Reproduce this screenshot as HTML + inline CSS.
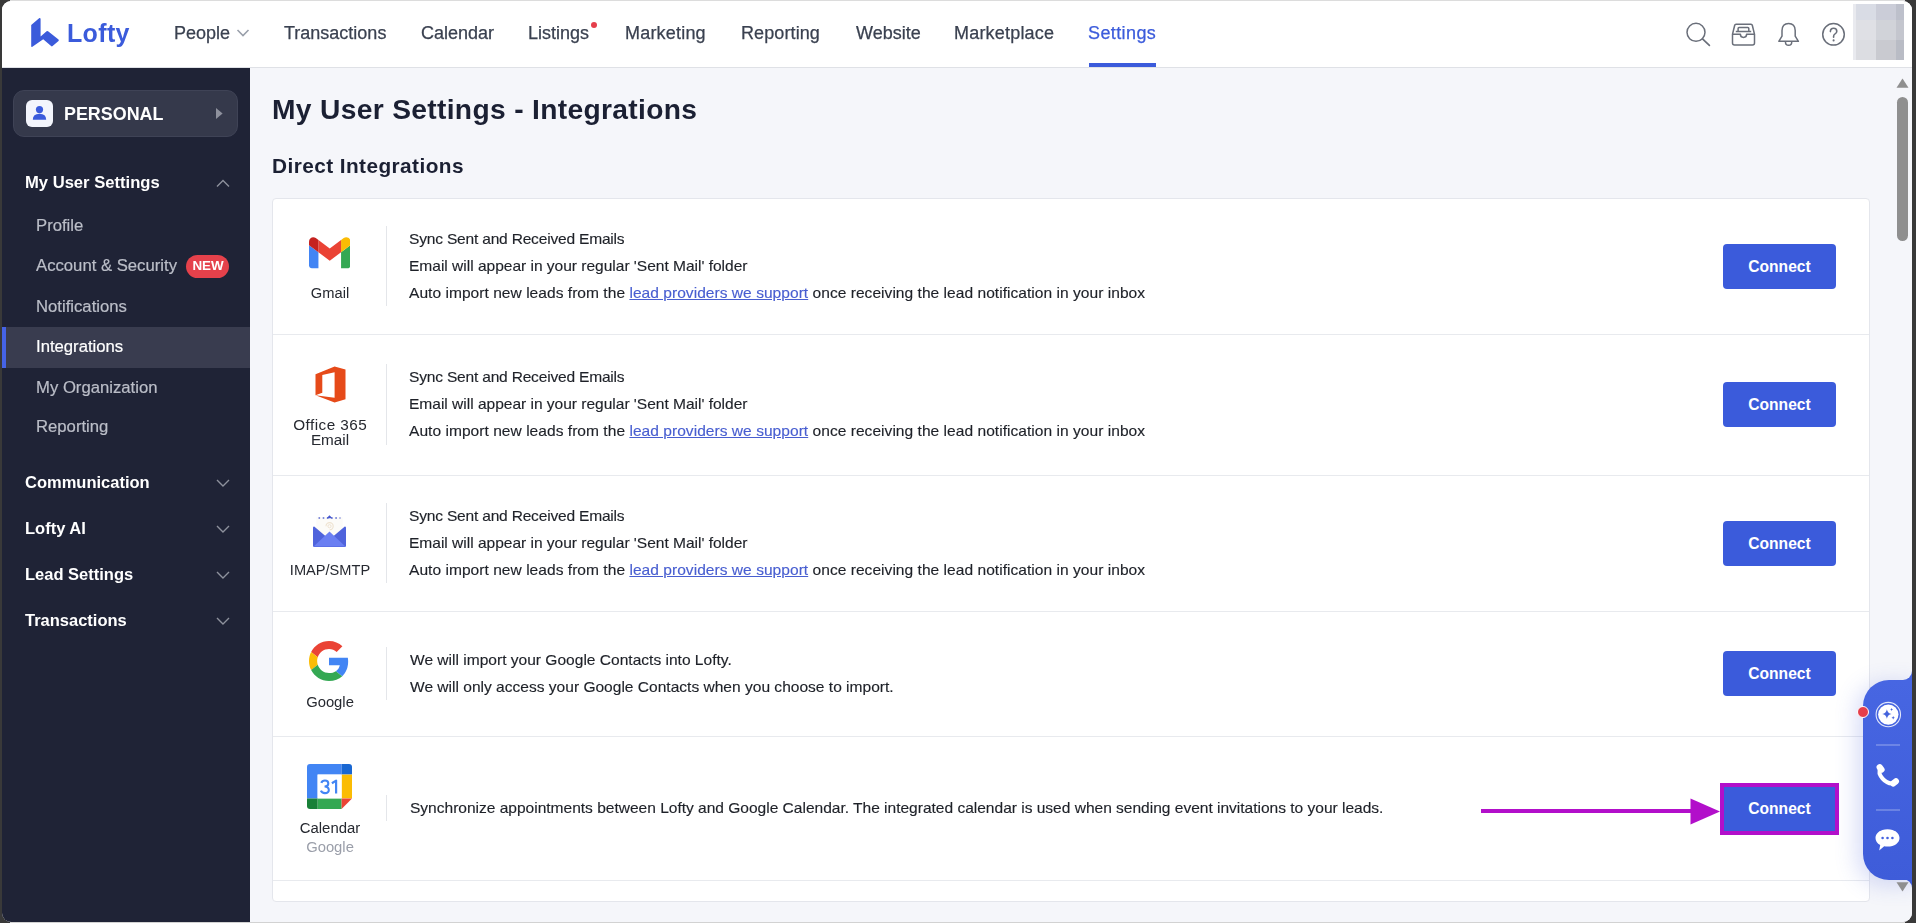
<!DOCTYPE html>
<html><head><meta charset="utf-8"><style>
html,body{margin:0;padding:0;}
body{width:1916px;height:923px;background:#393939;position:relative;overflow:hidden;font-family:"Liberation Sans", sans-serif;}
.win{position:absolute;left:2px;top:1px;width:1910px;height:921px;border-radius:9px;overflow:hidden;background:#f5f6fa;}
.t{position:absolute;white-space:nowrap;line-height:1;-webkit-font-smoothing:antialiased;will-change:transform;}

.btn{position:absolute;width:113px;height:45px;background:#3b5bdb;border-radius:4px;color:#fff;font-size:15.6px;font-weight:700;line-height:45px;text-align:center;}
</style></head><body>
<div style="position:absolute;left:10px;top:0;width:1895px;height:1px;background:#dcdcdc"></div>
<div style="position:absolute;left:10px;top:922px;width:1895px;height:1px;background:#d2d2d2"></div>
<div class="win">
<div style="position:absolute;left:0px;top:0px;width:1910px;height:66px;background:#fff"></div>
<div style="position:absolute;left:0px;top:66px;width:1910px;height:1px;background:#dfe1e6"></div>
<svg style="position:absolute;left:29px;top:16px" width="30" height="32" viewBox="31 17 30 32"><path fill="#3b5bdb" d="M31.2 25 L39.4 18 Q40.6 17.8 40.6 19.2 L40.6 36.6 L46.6 31.3 Q47.5 30.7 48.4 31.4 L58.5 39.6 Q59.2 40.4 58.5 41.1 L52.6 46.1 Q51.9 46.7 51.1 46.1 L43.2 39.3 L32.4 46.8 Q31.2 47.5 31.2 46 Z"/></svg>
<div class="t" style="left:65px;top:20px;font-size:25px;color:#3b5bdb;font-weight:700;letter-spacing:0.35px;">Lofty</div>
<div class="t" style="left:172px;top:23px;font-size:18px;color:#3a4150;font-weight:400;letter-spacing:0px;-webkit-text-stroke:0.25px #3a4150">People</div>
<div class="t" style="left:282px;top:23px;font-size:18.0px;color:#3a4150;font-weight:400;letter-spacing:0px;-webkit-text-stroke:0.25px #3a4150">Transactions</div>
<div class="t" style="left:419px;top:23px;font-size:18px;color:#3a4150;font-weight:400;letter-spacing:0px;-webkit-text-stroke:0.25px #3a4150">Calendar</div>
<div class="t" style="left:526px;top:23px;font-size:18.0px;color:#3a4150;font-weight:400;letter-spacing:0px;-webkit-text-stroke:0.25px #3a4150">Listings</div>
<div class="t" style="left:623px;top:23px;font-size:18.0px;color:#3a4150;font-weight:400;letter-spacing:0.2px;-webkit-text-stroke:0.25px #3a4150">Marketing</div>
<div class="t" style="left:739px;top:23px;font-size:18.0px;color:#3a4150;font-weight:400;letter-spacing:0.1px;-webkit-text-stroke:0.25px #3a4150">Reporting</div>
<div class="t" style="left:854px;top:23px;font-size:18px;color:#3a4150;font-weight:400;letter-spacing:0px;-webkit-text-stroke:0.25px #3a4150">Website</div>
<div class="t" style="left:952px;top:23px;font-size:18px;color:#3a4150;font-weight:400;letter-spacing:0.2px;-webkit-text-stroke:0.25px #3a4150">Marketplace</div>
<div class="t" style="left:1086px;top:23px;font-size:18px;color:#3b5bdb;font-weight:400;letter-spacing:0.4px;-webkit-text-stroke:0.25px #3b5bdb">Settings</div>
<div style="position:absolute;left:1087px;top:62px;width:67px;height:4px;background:#3b5bdb"></div>
<svg style="position:absolute;left:234px;top:27px" width="14" height="10" viewBox="0 0 14 10"><path d="M1.5 2 L7 7.5 L12.5 2" fill="none" stroke="#9aa0ab" stroke-width="1.6"/></svg>
<div style="position:absolute;left:589px;top:21px;width:6px;height:6px;background:#e53e4b;border-radius:50%"></div>
<svg style="position:absolute;left:1682px;top:20px" width="28" height="28" viewBox="0 0 28 28"><circle cx="12" cy="11.3" r="9" fill="none" stroke="#6a6f7a" stroke-width="1.5"/><path d="M18.5 17.9 L25.4 24.4" stroke="#6a6f7a" stroke-width="1.7" stroke-linecap="round"/></svg>
<svg style="position:absolute;left:1728px;top:21px" width="28" height="26" viewBox="0 0 28 26">
<path d="M6 2.3 L21 2.3 Q22 2.3 22.3 3.3 L24.5 12.3 L24.5 21.1 Q24.5 23.1 22.5 23.1 L4.5 23.1 Q2.5 23.1 2.5 21.1 L2.5 12.3 L4.7 3.3 Q5 2.3 6 2.3 Z" fill="none" stroke="#6a6f7a" stroke-width="1.5" stroke-linejoin="round"/>
<path d="M2.5 12.3 L10.4 12.3 Q10.4 15.4 13.5 15.4 Q16.6 15.4 16.6 12.3 L24.5 12.3" fill="none" stroke="#6a6f7a" stroke-width="1.5" stroke-linejoin="round"/>
<path d="M5.8 9.5 L21.2 9.5" stroke="#6a6f7a" stroke-width="1.5"/>
<path d="M8.1 9.5 L8.1 6.6 Q8.1 5.6 9.1 5.6 L17.8 5.6 Q18.8 5.6 18.8 6.6 L18.8 9.5" fill="none" stroke="#6a6f7a" stroke-width="1.5"/>
</svg>
<svg style="position:absolute;left:1774px;top:20px" width="26" height="28" viewBox="0 0 26 28"><path d="M12.6 2.6 Q19 2.6 19.2 9.6 L19.2 15.2 L22.4 20.3 L2.8 20.3 L6 15.2 L6 9.6 Q6.2 2.6 12.6 2.6 Z" fill="none" stroke="#6a6f7a" stroke-width="1.5" stroke-linejoin="round"/><path d="M9.4 20.4 Q9.5 24.3 12.6 24.3 Q15.7 24.3 15.8 20.4" fill="none" stroke="#6a6f7a" stroke-width="1.5"/></svg>
<svg style="position:absolute;left:1818px;top:20px" width="28" height="28" viewBox="0 0 28 28"><circle cx="13.5" cy="13.3" r="10.8" fill="none" stroke="#6a6f7a" stroke-width="1.5"/><path d="M10.4 10.6 Q10.4 7.2 13.6 7.2 Q16.8 7.2 16.8 10.2 Q16.8 12.1 14.8 13.1 Q13.6 13.7 13.6 15.4 L13.6 16.2" fill="none" stroke="#6a6f7a" stroke-width="1.6" stroke-linecap="round"/><circle cx="13.6" cy="19.4" r="1.05" fill="#6a6f7a"/></svg>
<div style="position:absolute;left:1851px;top:3px;width:3px;height:16px;background:#e9eaef"></div>
<div style="position:absolute;left:1851px;top:19px;width:3px;height:20px;background:#e9eaef"></div>
<div style="position:absolute;left:1851px;top:39px;width:3px;height:20px;background:#e9eaef"></div>
<div style="position:absolute;left:1854px;top:3px;width:20px;height:16px;background:#d9dce5"></div>
<div style="position:absolute;left:1854px;top:19px;width:20px;height:20px;background:#dfe0e5"></div>
<div style="position:absolute;left:1854px;top:39px;width:20px;height:20px;background:#dcdde2"></div>
<div style="position:absolute;left:1874px;top:3px;width:20px;height:16px;background:#cbcdd8"></div>
<div style="position:absolute;left:1874px;top:19px;width:20px;height:20px;background:#d1d3d9"></div>
<div style="position:absolute;left:1874px;top:39px;width:20px;height:20px;background:#c9cad0"></div>
<div style="position:absolute;left:1894px;top:3px;width:8px;height:16px;background:#bdc0cb"></div>
<div style="position:absolute;left:1894px;top:19px;width:8px;height:20px;background:#c4c6ce"></div>
<div style="position:absolute;left:1894px;top:39px;width:8px;height:20px;background:#b9bcc5"></div>
<div style="position:absolute;left:0px;top:67px;width:248px;height:923px;background:#1f2336"></div>
<div style="position:absolute;left:11px;top:89px;width:225px;height:47px;background:#35394b;border:1px solid #3f4356;box-sizing:border-box;border-radius:11px"></div>
<div style="position:absolute;left:24px;top:99px;width:27px;height:27px;background:#f3f5fc;border-radius:6px"></div>
<svg style="position:absolute;left:24px;top:99px" width="27" height="27" viewBox="0 0 27 27"><circle cx="13.5" cy="9.6" r="3.6" fill="#3b5bdb"/><path d="M6.8 19.8 Q6.8 13.8 13.5 13.8 Q20.2 13.8 20.2 19.8 Z" fill="#3b5bdb"/></svg>
<div class="t" style="left:62px;top:105px;font-size:17.9px;color:#ffffff;font-weight:700;letter-spacing:0px;">PERSONAL</div>
<svg style="position:absolute;left:213px;top:106px" width="9" height="13" viewBox="0 0 9 13"><path d="M1 1 L7.6 6.5 L1 12 Z" fill="#8e919d"/></svg>
<div class="t" style="left:23px;top:174px;font-size:16.6px;color:#ffffff;font-weight:700;letter-spacing:0px;">My User Settings</div>
<svg style="position:absolute;left:213px;top:176px" width="16" height="12" viewBox="0 0 16 12"><path d="M2 9.5 L8 3.5 L14 9.5" fill="none" stroke="#8e919d" stroke-width="1.4"/></svg>
<div style="position:absolute;left:0px;top:326px;width:248px;height:41px;background:#393c4f"></div>
<div style="position:absolute;left:0px;top:326px;width:4px;height:41px;background:#4563e6"></div>
<div class="t" style="left:34px;top:217px;font-size:16.7px;color:#bbbec8;font-weight:400;letter-spacing:0px;-webkit-text-stroke:0.2px #bbbec8">Profile</div>
<div class="t" style="left:34px;top:257px;font-size:16.7px;color:#bbbec8;font-weight:400;letter-spacing:0px;-webkit-text-stroke:0.2px #bbbec8">Account &amp; Security</div>
<div class="t" style="left:34px;top:298px;font-size:16.7px;color:#bbbec8;font-weight:400;letter-spacing:0px;-webkit-text-stroke:0.2px #bbbec8">Notifications</div>
<div class="t" style="left:34px;top:338px;font-size:16.7px;color:#ffffff;font-weight:400;letter-spacing:0px;-webkit-text-stroke:0.2px #ffffff">Integrations</div>
<div class="t" style="left:34px;top:379px;font-size:16.7px;color:#bbbec8;font-weight:400;letter-spacing:0px;-webkit-text-stroke:0.2px #bbbec8">My Organization</div>
<div class="t" style="left:34px;top:418px;font-size:16.7px;color:#bbbec8;font-weight:400;letter-spacing:0px;-webkit-text-stroke:0.2px #bbbec8">Reporting</div>
<div style="position:absolute;left:184px;top:254px;width:43px;height:23px;background:#e5414b;border-radius:12px"></div>
<div class="t" style="left:6px;width:400px;text-align:center;top:258px;font-size:13.4px;color:#ffffff;font-weight:700;letter-spacing:0px;text-indent:0px;">NEW</div>
<div class="t" style="left:23px;top:473px;font-size:16.5px;color:#ffffff;font-weight:700;letter-spacing:0px;">Communication</div>
<svg style="position:absolute;left:213px;top:476.3px" width="16" height="12" viewBox="0 0 16 12"><path d="M2 3 L8 9 L14 3" fill="none" stroke="#8e919d" stroke-width="1.4"/></svg>
<div class="t" style="left:23px;top:519px;font-size:16.5px;color:#ffffff;font-weight:700;letter-spacing:0px;">Lofty AI</div>
<svg style="position:absolute;left:213px;top:522.1px" width="16" height="12" viewBox="0 0 16 12"><path d="M2 3 L8 9 L14 3" fill="none" stroke="#8e919d" stroke-width="1.4"/></svg>
<div class="t" style="left:23px;top:565px;font-size:16.5px;color:#ffffff;font-weight:700;letter-spacing:0px;">Lead Settings</div>
<svg style="position:absolute;left:213px;top:567.6px" width="16" height="12" viewBox="0 0 16 12"><path d="M2 3 L8 9 L14 3" fill="none" stroke="#8e919d" stroke-width="1.4"/></svg>
<div class="t" style="left:23px;top:611px;font-size:16.5px;color:#ffffff;font-weight:700;letter-spacing:0px;">Transactions</div>
<svg style="position:absolute;left:213px;top:613.8px" width="16" height="12" viewBox="0 0 16 12"><path d="M2 3 L8 9 L14 3" fill="none" stroke="#8e919d" stroke-width="1.4"/></svg>
<div style="position:absolute;left:248px;top:67px;width:1662px;height:923px;background:#f5f6fa"></div>
<div class="t" style="left:270px;top:94px;font-size:28.2px;color:#1b2033;font-weight:700;letter-spacing:0.33px;">My User Settings - Integrations</div>
<div class="t" style="left:270px;top:155px;font-size:20.8px;color:#1b2033;font-weight:700;letter-spacing:0.43px;">Direct Integrations</div>
<div style="position:absolute;left:270px;top:197px;width:1598px;height:704px;background:#fff;border:1px solid #e4e6ec;box-sizing:border-box;border-radius:4px"></div>
<div style="position:absolute;left:271px;top:333px;width:1596px;height:1px;background:#e8eaee"></div>
<div style="position:absolute;left:271px;top:474px;width:1596px;height:1px;background:#e8eaee"></div>
<div style="position:absolute;left:271px;top:610px;width:1596px;height:1px;background:#e8eaee"></div>
<div style="position:absolute;left:271px;top:735px;width:1596px;height:1px;background:#e8eaee"></div>
<div style="position:absolute;left:271px;top:879px;width:1596px;height:1px;background:#e8eaee"></div>
<div style="position:absolute;left:384px;top:225px;width:1px;height:80px;background:#e4e6ea"></div>
<div style="position:absolute;left:384px;top:363px;width:1px;height:81px;background:#e4e6ea"></div>
<div style="position:absolute;left:384px;top:502px;width:1px;height:80px;background:#e4e6ea"></div>
<div style="position:absolute;left:384px;top:646px;width:1px;height:53px;background:#e4e6ea"></div>
<div style="position:absolute;left:384px;top:794px;width:1px;height:26px;background:#e4e6ea"></div>
<div class="t" style="left:407px;top:230px;font-size:15.55px;color:#1e2128;font-weight:400;letter-spacing:-0.2px;-webkit-text-stroke-width:0.15px">Sync Sent and Received Emails</div>
<div class="t" style="left:407px;top:257px;font-size:15.55px;color:#1e2128;font-weight:400;letter-spacing:-0.02px;-webkit-text-stroke-width:0.15px">Email will appear in your regular &#39;Sent Mail&#39; folder</div>
<div class="t" style="left:407px;top:284px;font-size:15.55px;color:#1e2128;font-weight:400;letter-spacing:0.03px;-webkit-text-stroke-width:0.15px">Auto import new leads from the <span style="color:#485ed0;text-decoration:underline">lead providers we support</span> once receiving the lead notification in your inbox</div>
<div class="t" style="left:407px;top:368px;font-size:15.55px;color:#1e2128;font-weight:400;letter-spacing:-0.2px;-webkit-text-stroke-width:0.15px">Sync Sent and Received Emails</div>
<div class="t" style="left:407px;top:395px;font-size:15.55px;color:#1e2128;font-weight:400;letter-spacing:-0.02px;-webkit-text-stroke-width:0.15px">Email will appear in your regular &#39;Sent Mail&#39; folder</div>
<div class="t" style="left:407px;top:422px;font-size:15.55px;color:#1e2128;font-weight:400;letter-spacing:0.03px;-webkit-text-stroke-width:0.15px">Auto import new leads from the <span style="color:#485ed0;text-decoration:underline">lead providers we support</span> once receiving the lead notification in your inbox</div>
<div class="t" style="left:407px;top:507px;font-size:15.55px;color:#1e2128;font-weight:400;letter-spacing:-0.2px;-webkit-text-stroke-width:0.15px">Sync Sent and Received Emails</div>
<div class="t" style="left:407px;top:534px;font-size:15.55px;color:#1e2128;font-weight:400;letter-spacing:-0.02px;-webkit-text-stroke-width:0.15px">Email will appear in your regular &#39;Sent Mail&#39; folder</div>
<div class="t" style="left:407px;top:561px;font-size:15.55px;color:#1e2128;font-weight:400;letter-spacing:0.03px;-webkit-text-stroke-width:0.15px">Auto import new leads from the <span style="color:#485ed0;text-decoration:underline">lead providers we support</span> once receiving the lead notification in your inbox</div>
<div class="t" style="left:408px;top:651px;font-size:15.55px;color:#1e2128;font-weight:400;letter-spacing:0px;-webkit-text-stroke-width:0.15px">We will import your Google Contacts into Lofty.</div>
<div class="t" style="left:408px;top:678px;font-size:15.55px;color:#1e2128;font-weight:400;letter-spacing:0px;-webkit-text-stroke-width:0.15px">We will only access your Google Contacts when you choose to import.</div>
<div class="t" style="left:408px;top:799px;font-size:15.55px;color:#1e2128;font-weight:400;letter-spacing:-0.015px;-webkit-text-stroke-width:0.15px">Synchronize appointments between Lofty and Google Calendar. The integrated calendar is used when sending event invitations to your leads.</div>
<div class="t" style="left:128px;width:400px;text-align:center;top:285px;font-size:14.7px;color:#262930;font-weight:400;letter-spacing:0px;text-indent:0px;">Gmail</div>
<div class="t" style="left:128px;width:400px;text-align:center;top:416px;font-size:15.3px;color:#262930;font-weight:400;letter-spacing:0.45px;text-indent:0.45px;">Office 365</div>
<div class="t" style="left:128px;width:400px;text-align:center;top:431px;font-size:15.3px;color:#262930;font-weight:400;letter-spacing:0px;text-indent:0px;">Email</div>
<div class="t" style="left:128px;width:400px;text-align:center;top:562px;font-size:14.6px;color:#262930;font-weight:400;letter-spacing:0px;text-indent:0px;">IMAP/SMTP</div>
<div class="t" style="left:128px;width:400px;text-align:center;top:694px;font-size:14.8px;color:#262930;font-weight:400;letter-spacing:0px;text-indent:0px;">Google</div>
<div class="t" style="left:128px;width:400px;text-align:center;top:820px;font-size:14.9px;color:#262930;font-weight:400;letter-spacing:0px;text-indent:0px;">Calendar</div>
<div class="t" style="left:128px;width:400px;text-align:center;top:839px;font-size:14.8px;color:#9a9ea9;font-weight:400;letter-spacing:0px;text-indent:0px;">Google</div>
<div class="btn" style="left:1721px;top:243px;">Connect</div>
<div class="btn" style="left:1721px;top:381px;">Connect</div>
<div class="btn" style="left:1721px;top:520px;">Connect</div>
<div class="btn" style="left:1721px;top:650px;">Connect</div>
<div class="btn" style="left:1721px;top:785px;border-radius:0;">Connect</div>
<svg style="position:absolute;left:306.7px;top:236px" width="41.5" height="31.5" viewBox="52 42 88 66"><path fill="#4285f4" d="M58 108h14V74L52 59v43c0 3.32 2.69 6 6 6"/><path fill="#34a853" d="M120 108h14c3.32 0 6-2.69 6-6V59l-20 15"/><path fill="#fbbc04" d="M120 48v26l20-15v-8c0-7.42-8.47-11.65-14.4-7.2"/><path fill="#ea4335" d="M72 74V48l24 18 24-18v26L96 92"/><path fill="#c5221f" d="M52 51v8l20 15V48l-5.6-4.2c-5.940-4.450-14.400-.220-14.400 7.200"/></svg>
<svg style="position:absolute;left:312.5px;top:365px" width="31" height="37" viewBox="0 0 31 37"><path fill="#e64a19" d="M0.5 8.2 L19.6 0.6 L30.5 3.6 L30.5 33.2 L19.6 36.4 L0.5 29.2 L19.6 31.8 L19.6 6.2 L7.3 9 L7.3 26.8 L0.5 29.2 Z"/></svg>
<svg style="position:absolute;left:310px;top:512px" width="35" height="35" viewBox="0 0 35 35">
<path d="M4.3 4.2 L30.7 4.2 L30.7 17 L17.5 27 L4.3 17 Z" fill="#fcfbf8"/>
<path d="M14 13.2 A3.6 3.6 0 1 1 17.6 16.8 M17.6 13.2 A0.1 0.1 0 0 0 17.6 13.2" fill="none" stroke="#eee2d0" stroke-width="1.1"/>
<circle cx="17.5" cy="13.2" r="1.6" fill="none" stroke="#efe3d2" stroke-width="1"/>
<path d="M6.5 5 L28.5 5" stroke="#5a6ad0" stroke-width="1.3" stroke-dasharray="1.6 2.6"/>
<path d="M14.6 5.3 L17.5 2.2 L20.4 5.3 Z" fill="#4557cf"/>
<path d="M1 14.8 Q1 13.5 2.2 13.5 L17.5 26.4 L32.8 13.5 Q34 13.5 34 14.8 L34 32.8 Q34 34 32.8 34 L2.2 34 Q1 34 1 32.8 Z" fill="#4f63dc"/>
<path d="M1.6 33.6 L17.5 18.6 L33.4 33.6 Z" fill="#6a7ff2"/>
</svg>
<svg style="position:absolute;left:307px;top:640px" width="40" height="40" viewBox="0 0 48 48"><path fill="#EA4335" d="M24 9.5c3.54 0 6.71 1.22 9.21 3.6l6.85-6.85C35.9 2.38 30.470 0 24 0 14.620 0 6.510 5.380 2.560 13.220l7.980 6.190C12.430 13.720 17.740 9.500 24 9.500z"/><path fill="#4285F4" d="M46.98 24.55c0-1.570-.150-3.090-.380-4.550H24v9.020h12.940c-.580 2.960-2.260 5.480-4.780 7.180l7.730 6c4.510-4.180 7.090-10.360 7.090-17.650z"/><path fill="#FBBC05" d="M10.53 28.59c-.480-1.450-.760-2.990-.760-4.590s.270-3.140.760-4.590l-7.980-6.190C.920 16.460 0 20.120 0 24c0 3.880.920 7.540 2.560 10.780l7.970-6.190z"/><path fill="#34A853" d="M24 48c6.480 0 11.930-2.130 15.890-5.810l-7.730-6c-2.150 1.450-4.920 2.300-8.160 2.300-6.260 0-11.570-4.220-13.470-9.910l-7.980 6.190C6.510 42.620 14.620 48 24 48z"/></svg>
<svg style="position:absolute;left:305px;top:763px" width="45" height="45" viewBox="0 0 45 45">
<path d="M3 0 L34.6 0 L34.6 10.6 L10.6 10.6 L10.6 34.4 L0 34.4 L0 3 Q0 0 3 0 Z" fill="#4285f4"/>
<path d="M34.6 0 L42 0 Q45 0 45 3 L45 10.6 L34.6 10.6 Z" fill="#1967d2"/>
<path d="M34.6 10.6 L45 10.6 L45 34.4 L34.6 34.4 Z" fill="#fbbc04"/>
<path d="M10.6 34.4 L34.6 34.4 L34.6 45 L10.6 45 Z" fill="#34a853"/>
<path d="M0 34.4 L10.6 34.4 L10.6 45 L3 45 Q0 45 0 42 Z" fill="#188038"/>
<path d="M34.6 34.4 L45 34.4 L34.6 45 Z" fill="#ea4335"/>
<rect x="10.6" y="10.6" width="24" height="23.8" fill="#fff"/>
<path d="M14.3 18.8 Q15.1 16.5 18 16.5 Q21.3 16.5 21.3 19.5 Q21.3 22.3 17.6 22.5 Q21.8 22.7 21.8 26 Q21.8 29.1 17.9 29.1 Q14.8 29.1 13.9 26.7" fill="none" stroke="#4285f4" stroke-width="2.1"/><path d="M24.9 19.3 L29.1 16.6 L29.1 29.6" fill="none" stroke="#4285f4" stroke-width="2.2" stroke-linejoin="round"/>
</svg>
<div style="position:absolute;left:1896px;top:667px;width:14px;height:14px;background:#4664e1"></div>
<div style="position:absolute;left:1884px;top:639px;width:26px;height:40px;background:#f5f6fa;border-bottom-right-radius:9px"></div>
<div style="position:absolute;left:1896px;top:876px;width:14px;height:14px;background:#3e5cd9"></div>
<div style="position:absolute;left:1884px;top:878px;width:26px;height:40px;background:#f5f6fa;border-top-right-radius:9px"></div>
<div style="position:absolute;left:1861px;top:679px;width:60px;height:200px;background:linear-gradient(#4766e2,#3e5cd9);border-radius:26px 0 0 26px;box-shadow:-6px 4px 22px rgba(70,90,220,0.22)"></div>
<div style="position:absolute;left:1855px;top:705px;width:12px;height:12px;background:#e53e4b;border-radius:50%;border:1.6px solid #fff;box-sizing:border-box"></div>
<svg style="position:absolute;left:1873px;top:700px" width="27" height="27" viewBox="0 0 27 27"><circle cx="13.3" cy="13.6" r="12.2" fill="none" stroke="#fff" stroke-width="1.1" opacity="0.85"/><circle cx="13.3" cy="13.6" r="10.2" fill="#fff"/>
<path d="M11.9 8.2 Q12.5 12.4 16.6 13 Q12.5 13.6 11.9 17.8 Q11.3 13.6 7.2 13 Q11.3 12.4 11.9 8.2 Z" fill="#4463dc"/>
<path d="M16.6 6.9 Q16.8 8.2 18 8.4 Q16.8 8.6 16.6 9.9 Q16.4 8.6 15.2 8.4 Q16.4 8.2 16.6 6.9 Z" fill="#4463dc"/>
<path d="M18.2 14.9 Q18.45 16.4 19.9 16.7 Q18.45 17 18.2 18.5 Q17.95 17 16.5 16.7 Q17.95 16.4 18.2 14.9 Z" fill="#4463dc"/></svg>
<div style="position:absolute;left:1874px;top:743px;width:24px;height:2px;background:rgba(255,255,255,0.22)"></div>
<div style="position:absolute;left:1874px;top:808px;width:24px;height:2px;background:rgba(255,255,255,0.22)"></div>
<svg style="position:absolute;left:1872px;top:761px" width="27" height="27" viewBox="0 0 27 27">
<path d="M6.2 6.5 C4.6 9.5 5.6 13.2 8.6 16.6 C11.8 20.2 15.6 22 19.6 21.2" fill="none" stroke="#fff" stroke-width="4" stroke-linecap="round"/>
<rect x="-3.1" y="-4.6" width="6.2" height="9.2" rx="3.1" transform="translate(6.6 6.4) rotate(-38)" fill="#fff"/>
<rect x="-4.8" y="-3.1" width="9.6" height="6.2" rx="3.1" transform="translate(20.6 20.4) rotate(-40)" fill="#fff"/>
</svg>
<svg style="position:absolute;left:1872px;top:826px" width="27" height="25" viewBox="0 0 27 25"><path fill="#fff" d="M13.5 2.2 C20.5 2.2 25.5 6.1 25.5 11 C25.5 15.9 20.5 19.6 13.5 19.6 C12.3 19.6 11.2 19.5 10.2 19.2 L5.2 23.4 L6.2 18 C3.2 16.4 1.5 13.9 1.5 11 C1.5 6.1 6.5 2.2 13.5 2.2 Z"/><circle cx="8.6" cy="11" r="1.3" fill="#4361e0"/><circle cx="13.5" cy="11" r="1.3" fill="#4361e0"/><circle cx="18.4" cy="11" r="1.3" fill="#4361e0"/></svg>
<svg style="position:absolute;left:1893px;top:76px" width="15" height="12" viewBox="0 0 15 12"><path d="M1.5 10.8 L7.5 1.5 L13.5 10.8 Z" fill="#8f8f8f"/></svg>
<div style="position:absolute;left:1895px;top:96px;width:11px;height:144px;background:#8f8f8f;border-radius:6px"></div>
<svg style="position:absolute;left:1893px;top:880px" width="15" height="12" viewBox="0 0 15 12"><path d="M1.5 1.2 L7.5 10.5 L13.5 1.2 Z" fill="#8f8f8f"/></svg>
<div style="position:absolute;left:1479px;top:808px;width:212px;height:4px;background:#b20fca"></div>
<svg style="position:absolute;left:1688px;top:797px" width="31" height="27" viewBox="0 0 31 27"><path d="M0.5 0.5 L30 13.5 L0.5 26.5 Z" fill="#b20fca"/></svg>
<div style="position:absolute;left:1717.5px;top:781.5px;width:119.5px;height:52px;border:4.6px solid #b20fca;box-sizing:border-box"></div>
</div>
</body></html>
